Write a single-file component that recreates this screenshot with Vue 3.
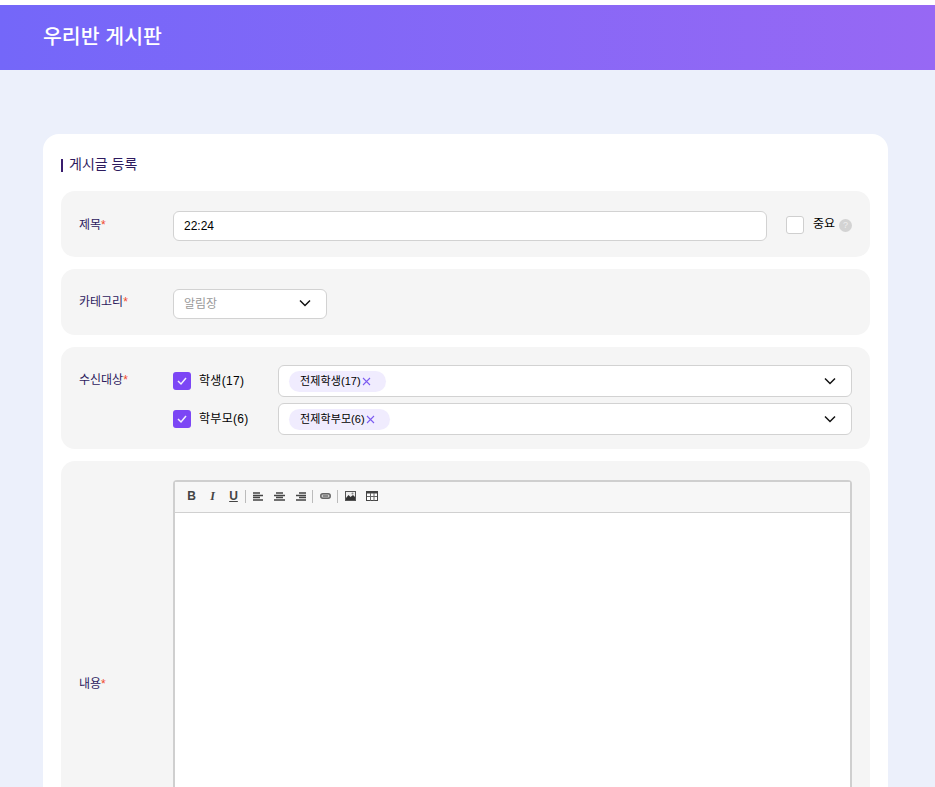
<script setup>
const recipients = [
  { label: '학생(17)', tag: '전제학생(17)' },
  { label: '학부모(6)', tag: '전제학부모(6)' },
]
</script>

<template>
  <div class="page">
    <header class="top"><h1>우리반 게시판</h1></header>
    <main class="card">
      <h2 class="title">게시글 등록</h2>
      <section class="row row-title">
        <label class="lab">제목<i>*</i></label>
        <input class="text" value="22:24" />
        <span class="box"></span>
        <span class="imp">중요</span>
        <span class="help">?</span>
      </section>
      <section class="row row-cat">
        <label class="lab">카테고리<i>*</i></label>
        <div class="select cat">
          <span class="ph">알림장</span>
          <svg class="chev" width="12" height="8" viewBox="0 0 12 8"><path d="M1 1.500l5 5 5-5" fill="none" stroke="#111" stroke-width="1.500"/></svg>
        </div>
      </section>
      <section class="row row-rec">
        <label class="lab">수신대상<i>*</i></label>
        <div class="recs">
          <div v-for="r in recipients" :key="r.label" class="rec">
            <span class="check"><svg width="12" height="10" viewBox="0 0 12 10"><path d="M2 5l3 3 5-6" fill="none" stroke="#f3eefe" stroke-width="1.500"/></svg></span>
            <span class="reclabel">{{ r.label }}</span>
            <div class="select multi">
              <span class="tag">{{ r.tag }}<svg width="9" height="9" viewBox="0 0 9 9"><path d="M1 1l7 7M8 1l-7 7" stroke="#7c5cf0" stroke-width="1.100"/></svg></span>
              <svg class="chev" width="12" height="8" viewBox="0 0 12 8"><path d="M1 1.500l5 5 5-5" fill="none" stroke="#111" stroke-width="1.500"/></svg>
            </div>
          </div>
        </div>
      </section>
      <section class="row row-body">
        <label class="lab lab-body">내용<i>*</i></label>
        <div class="editor">
          <div class="toolbar">
            <span class="slot"><b class="tb b">B</b></span>
            <span class="slot"><em class="tb i">I</em></span>
            <span class="slot"><u class="tb u">U</u></span>
            <span class="sep"></span>
            <span class="slot"><svg width="11" height="9" viewBox="0 0 11 9"><path d="M0 1h7M0 3.500h10M0 5.500h7M0 8h10" stroke="#444" stroke-width="1.300"/></svg></span>
            <span class="slot"><svg width="11" height="9" viewBox="0 0 11 9"><path d="M2 1h7M0 3.500h11M2 5.500h7M0 8h11" stroke="#444" stroke-width="1.300"/></svg></span>
            <span class="slot"><svg width="11" height="9" viewBox="0 0 11 9"><path d="M4 1h7M1 3.500h10M4 5.500h7M1 8h10" stroke="#444" stroke-width="1.300"/></svg></span>
            <span class="sep"></span>
            <span class="slot"><svg width="11" height="6" viewBox="0 0 11 6"><rect x=".8" y=".8" width="9.400" height="4.400" rx="2" fill="#ccc" stroke="#666" stroke-width="1.500"/><path d="M3 3h5" stroke="#666" stroke-width="1.300"/></svg></span>
            <span class="sep"></span>
            <span class="slot"><svg width="11" height="10" viewBox="0 0 11 10"><rect x=".5" y=".5" width="10" height="9" fill="#eee" stroke="#555"/><path d="M1 9V7l2.500-3 2 2 2.500-2 2 2v3z" fill="#333"/><circle cx="7.500" cy="2.500" r="1" fill="#888"/></svg></span>
            <span class="slot"><svg width="12" height="10" viewBox="0 0 12 10"><rect x=".5" y=".5" width="11" height="9" fill="#fff" stroke="#444"/><path d="M0 1.500h12" stroke="#444" stroke-width="2"/><path d="M4.500 2v8M8 2v8M1 5.500h10" stroke="#666"/></svg></span>
          </div>
          <div class="area"></div>
        </div>
      </section>
    </main>
  </div>
</template>

<style>
html, body { margin: 0; overflow: hidden; height: 787px; background: #ecf0fb; }
</style>

<style scoped>
.page {
  padding-top: 5px;
  height: 782px;
  overflow: hidden;
  background: linear-gradient(#fff 5px, #ecf0fb 5px);
  font-family: "Liberation Sans", "Noto Sans CJK KR", sans-serif;
  color: #000;
}
.top {
  height: 65px;
  display: flex;
  align-items: center;
  padding-left: 43px;
  background: linear-gradient(90deg, #7467f9, #9768f4);
}
.top h1 { margin: -6px 0 0; font-size: 20.500px; font-weight: 500; color: #fff; }
.card {
  margin: 64px 47px 0 43px;
  background: #fff;
  border-radius: 16px;
  padding: 18px;
}
.title {
  margin: 0 0 15px;
  height: 24px;
  line-height: 24px;
  font-size: 14px;
  font-weight: 400;
  color: #2d1a5e;
  padding-left: 8px;
  position: relative;
}
.title::before {
  content: "";
  position: absolute;
  left: 0;
  top: 7px;
  width: 2px;
  height: 13px;
  background: #3a1d6e;
}
.row {
  display: flex;
  background: #f5f5f5;
  border-radius: 14px;
  margin-bottom: 12px;
  padding: 0 18px;
  box-sizing: border-box;
}
.lab {
  width: 94px;
  flex: none;
  font-size: 12px;
  color: #2d1a5e;
  line-height: 18px;
}
.lab i { font-style: normal; color: #f04a2e; }
.row-title { height: 66px; padding-top: 20px; }
.row-title .lab { margin-top: 5px; }
.text {
  width: 594px;
  height: 30px;
  box-sizing: border-box;
  border: 1px solid #d2d2d2;
  border-radius: 6px;
  padding: 0 10px;
  font: 12px "Liberation Sans", "Noto Sans CJK KR", sans-serif;
  background: #fff;
  outline: none;
}
.box {
  width: 18px;
  height: 18px;
  box-sizing: border-box;
  border: 1px solid #cfcfcf;
  border-radius: 3px;
  background: #fff;
  margin: 5px 0 0 19px;
}
.imp { font-size: 12px; margin-left: 9px; line-height: 18px; margin-top: 4px; }
.help {
  width: 13px;
  height: 13px;
  border-radius: 50%;
  background: #d3d3d3;
  color: #eee;
  font-size: 9px;
  line-height: 13px;
  text-align: center;
  margin: 8px 0 0 4px;
}
.row-cat { height: 66px; padding-top: 20px; }
.row-cat .lab { margin-top: 4px; }
.select {
  display: flex;
  align-items: center;
  height: 30px;
  box-sizing: border-box;
  border: 1px solid #d2d2d2;
  border-radius: 6px;
  background: #fff;
  position: relative;
}
.cat { width: 154px; padding-left: 10px; }
.ph { font-size: 12px; color: #9a9a9a; margin-top: -4px; }
.chev { position: absolute; right: 15px; top: 9px; }
.multi .chev { top: 11px; }
.row-rec { height: 102px; padding-top: 18px; }
.row-rec .lab { margin-top: 6px; }
.recs { display: flex; flex-direction: column; gap: 6px; flex: 1; }
.rec { display: flex; align-items: center; height: 32px; }
.check {
  width: 18px;
  height: 18px;
  border-radius: 3px;
  background: #7c46f5;
  display: flex;
  align-items: center;
  justify-content: center;
}
.reclabel { width: 79px; margin-left: 8px; font-size: 12px; margin-top: -3px; letter-spacing: .3px; }
.multi { flex: 1; height: 32px; padding-left: 10px; }
.tag {
  height: 21px;
  padding: 0 15px 0 11px;
  border-radius: 11px;
  background: #f0ecfe;
  font-size: 11px;
  display: flex;
  align-items: center;
  gap: 1px;
  line-height: 19px;
  letter-spacing: .1px;
}
.row-body { height: 500px; padding-top: 19px; margin-bottom: 0; }
.lab-body { margin-top: 195px; }
.editor {
  flex: 1;
  height: 480px;
  box-sizing: border-box;
  border: 2px solid #cfcfcf;
  border-width: 2px 2px 0;
  border-radius: 4px 4px 0 0;
  background: #fff;
}
.toolbar {
  height: 31px;
  box-sizing: border-box;
  background: #f7f7f7;
  border-bottom: 1px solid #d0d0d0;
  display: flex;
  align-items: center;
  padding: 0 0 2px 6px;
  color: #444;
}
.slot { width: 21px; display: flex; justify-content: center; align-items: center; }
.tb { font: 700 12px "Liberation Sans", sans-serif; }
.i { font-family: "Liberation Serif", serif; font-style: italic; }
.sep { width: 1px; height: 13px; background: #bbb; margin: 0 2px 0 1px; }
</style>
